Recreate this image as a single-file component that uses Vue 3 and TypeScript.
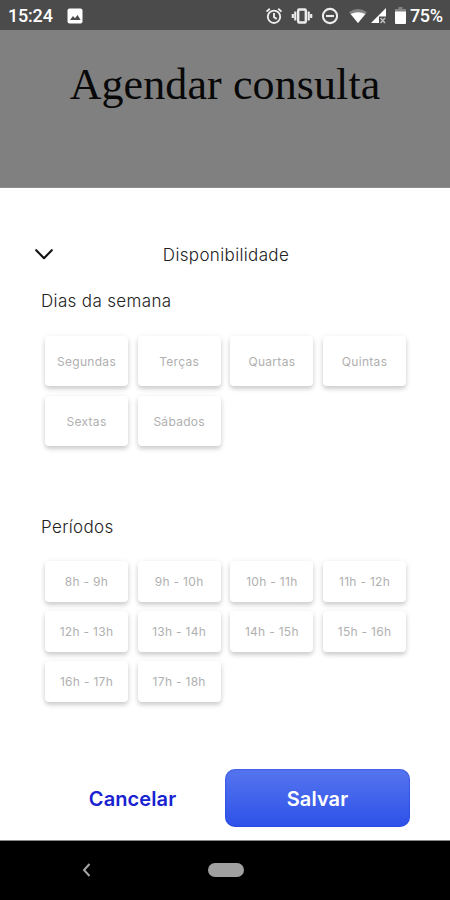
<script setup lang="ts">
import { ref } from 'vue'

const days: string[] = ['Segundas', 'Terças', 'Quartas', 'Quintas', 'Sextas', 'Sábados']
const periods: string[] = [
  '8h - 9h', '9h - 10h', '10h - 11h', '11h - 12h', '12h - 13h',
  '13h - 14h', '14h - 15h', '15h - 16h', '16h - 17h', '17h - 18h',
]
const selected = ref<string[]>([])

function toggle(slot: string): void {
  selected.value = selected.value.includes(slot)
    ? selected.value.filter((s) => s !== slot)
    : [...selected.value, slot]
}
</script>

<template>
  <div class="screen">
    <header class="status">
      <span class="clock">15:24</span>
      <svg class="photo" width="16" height="16" viewBox="0 0 16 16">
        <rect x="0.5" y="0.5" width="15" height="15" rx="2" fill="#fff" />
        <path d="M3 12l3-4 2 2.3L10.6 7l3 5z" fill="#4b4b4b" />
      </svg>
      <div class="tray">
        <svg width="18" height="18" viewBox="0 0 18 18" fill="none" stroke="#ececec" stroke-width="1.9">
          <circle cx="9" cy="9.8" r="6.2" />
          <path d="M9 6v4.2l2.8 1.7M1.5 4.6l3.3-2.8M16.5 4.6l-3.3-2.8" />
        </svg>
        <svg width="22" height="18" viewBox="0 0 22 18" fill="none" stroke="#ececec" stroke-width="2.4">
          <rect x="7.2" y="2.5" width="7.6" height="13" rx="1" />
          <path d="M4.3 4.5v9M1.8 7v4M17.7 4.5v9M20.2 7v4" stroke-width="2.2" />
        </svg>
        <svg width="18" height="18" viewBox="0 0 18 18" fill="none" stroke="#ececec" stroke-width="2.1">
          <circle cx="9" cy="9" r="7.1" />
          <path d="M5 9h8" />
        </svg>
        <svg class="wifi" width="20" height="16" viewBox="0 0 20 16">
          <path d="M1 4.3Q10-2.3 19 4.3L10 15z" fill="#858585" />
          <path d="M2.6 6.1Q10 2.6 17.4 6.1L10 15z" fill="#fff" />
        </svg>
        <svg class="signal" width="17" height="16" viewBox="0 0 17 16">
          <path d="M16 0v15H1z" fill="#fff" />
          <path d="M9 8.5H17V16H9z" fill="#4b4b4b" />
          <path d="M10.5 10l4.5 5m0-5l-4.5 5" stroke="#bbb" stroke-width="1.6" />
        </svg>
        <svg class="battery" width="11" height="17" viewBox="0 0 11 17">
          <path d="M3.5 0h4v2H11v3H0V2h3.5z" fill="#858585" />
          <path d="M0 4.5h11V16a1 1 0 0 1-1 1H1a1 1 0 0 1-1-1z" fill="#fff" />
        </svg>
        <span class="percent">75%</span>
      </div>
    </header>

    <div class="backdrop">
      <h1>Agendar consulta</h1>
    </div>

    <main class="sheet">
      <div class="sheet-head">
        <svg width="20" height="12" viewBox="0 0 20 12">
          <path d="M2.2 1.2l7.8 8 7.8-8" fill="none" stroke="#111" stroke-width="2.1" stroke-linecap="round" stroke-linejoin="round" />
        </svg>
        <h2>Disponibilidade</h2>
      </div>

      <section class="days">
        <h3>Dias da semana</h3>
        <div class="grid">
          <button v-for="day in days" :key="day" class="card" :class="{ on: selected.includes(day) }" @click="toggle(day)">
            {{ day }}
          </button>
        </div>
      </section>

      <section class="periods">
        <h3>Períodos</h3>
        <div class="grid">
          <button v-for="p in periods" :key="p" class="card" :class="{ on: selected.includes(p) }" @click="toggle(p)">
            {{ p }}
          </button>
        </div>
      </section>

      <div class="actions">
        <button class="cancel">Cancelar</button>
        <button class="save">Salvar</button>
      </div>
    </main>

    <nav class="navbar">
      <svg width="9" height="14" viewBox="0 0 9 14">
        <path d="M7.5 1L2 7l5.5 6" fill="none" stroke="#a5a5a5" stroke-width="2" />
      </svg>
      <span class="pill"></span>
    </nav>
  </div>
</template>

<style>
body {
  margin: 0;
}
</style>

<style scoped>
.screen {
  width: 450px;
  height: 900px;
  display: flex;
  flex-direction: column;
  overflow: hidden;
  background: #fff;
  font-family: Inter, "Liberation Sans", sans-serif;
}
.screen * {
  box-sizing: border-box;
}
button {
  border: 0;
  padding: 0;
  background: none;
  font-family: inherit;
}
h1, h2, h3 {
  margin: 0;
  font-weight: 400;
}
.status {
  height: 30px;
  flex: none;
  display: flex;
  align-items: center;
  padding: 1px 7px 0 8px;
  background: #4b4b4b;
  color: #fff;
  font: 500 18px/30px Roboto, sans-serif;
}
.clock {
  width: 59px;
  letter-spacing: -0.2px;
}
.tray {
  margin-left: auto;
  display: flex;
  align-items: center;
}
.tray svg + svg {
  margin-left: 8px;
}
.tray .wifi.wifi {
  margin-left: 9px;
}
.tray .signal.signal {
  margin-left: 2px;
}
.tray .battery.battery {
  margin-left: 8px;
}
.percent {
  width: 33px;
  margin-left: 4px;
  letter-spacing: -0.4px;
}
.backdrop {
  height: 158px;
  flex: none;
  padding-top: 30px;
  background: #808080;
  border-bottom: 1px solid #8c8c8c;
  text-align: center;
}
h1 {
  font: 400 44px/50px "Liberation Serif", serif;
  letter-spacing: 0.1px;
  color: #080808;
}
.sheet {
  height: 653px;
  flex: none;
  display: flex;
  flex-direction: column;
  padding: 54px 40px 0;
  border-bottom: 1px solid #888;
}
.sheet-head {
  display: grid;
  grid-template-columns: 20px 1fr 20px;
  align-items: center;
  height: 24px;
  margin: 0 -6px;
}
h2 {
  padding: 1px 0 0 2px;
  text-align: center;
  font-size: 17px;
  font-weight: 300;
  line-height: 24px;
  letter-spacing: 0.35px;
  color: #222;
}
h3 {
  height: 24px;
  padding-left: 1px;
  font-size: 17px;
  line-height: 25px;
  font-weight: 300;
  letter-spacing: 0.35px;
  color: #222;
}
.days {
  padding-top: 23px;
}
.periods {
  padding-top: 68px;
}
.periods h3 {
  line-height: 26px;
}
.grid {
  display: grid;
  grid-template-columns: repeat(4, 83px);
  gap: 10px 9.7px;
  padding: 23px 0 0 5px;
}
.days .grid {
  grid-auto-rows: 50px;
}
.periods .grid {
  grid-auto-rows: 41px;
  row-gap: 9px;
}
.card {
  border-radius: 4px;
  background: #fff;
  box-shadow: 0 3px 4px rgba(0, 0, 0, 0.16), 0 1px 7px rgba(0, 0, 0, 0.07);
  color: #b0b0b0;
  font-size: 12px;
  letter-spacing: 0.3px;
}
.card.on {
  color: #2f50e8;
}
.actions {
  display: grid;
  grid-template-columns: 185px 185px;
  height: 58px;
  margin-top: 67px;
}
.cancel,
.save {
  padding-top: 2px;
  font-size: 20px;
  font-weight: 600;
}
.cancel {
  letter-spacing: 0.1px;
  color: #1822d1;
}
.save {
  border-radius: 10px;
  background: linear-gradient(#5575ee, #2e51e9);
  box-shadow: inset 0 0 1px 1px rgba(30, 60, 220, 0.35);
  color: #fff;
  letter-spacing: 0.1px;
}
.navbar {
  height: 59px;
  flex: none;
  display: flex;
  align-items: center;
  padding: 0 0 1px 82px;
  background: #000;
}
.pill {
  width: 36px;
  height: 14px;
  margin-left: 117px;
  border-radius: 7px;
  background: #a0a0a0;
}
</style>
